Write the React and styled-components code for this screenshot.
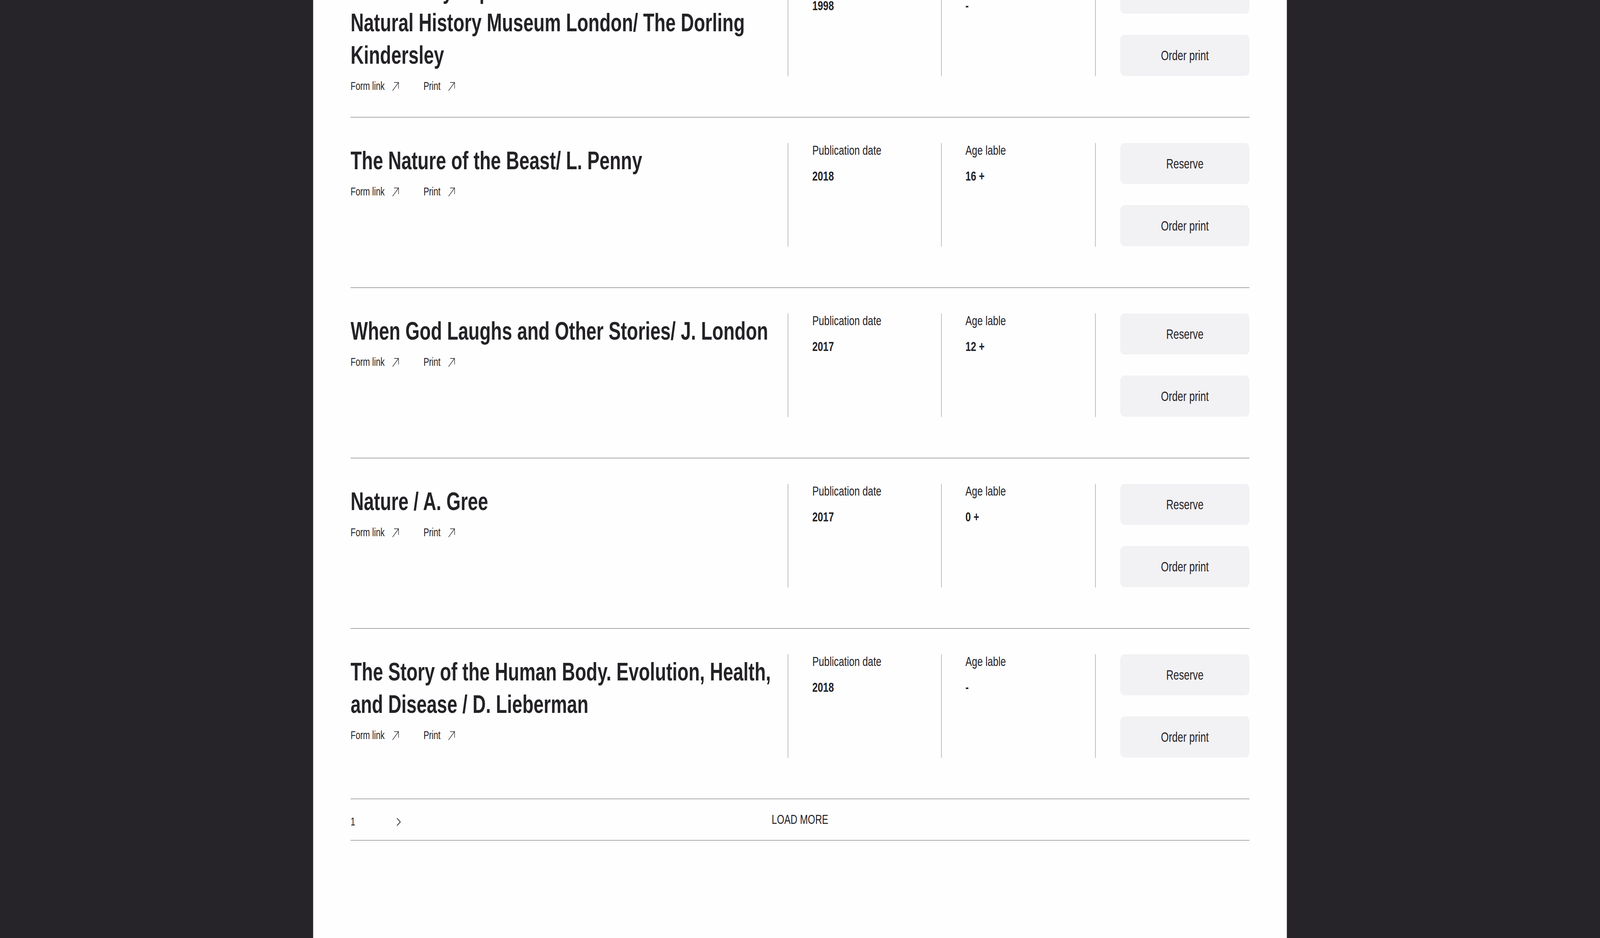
import React, { useLayoutEffect, useState } from "react";
import styled, { createGlobalStyle } from "styled-components";

const DESIGN_WIDTH = 5600;

const GlobalStyle = createGlobalStyle`
  html, body {
    margin: 0;
    padding: 0;
    background: #262428;
    overflow: hidden;
  }
  body {
    font-family: "Liberation Sans", Arial, Helvetica, sans-serif;
    color: #242226;
  }
  * { box-sizing: border-box; }
`;

const Stage = styled.div`
  width: ${DESIGN_WIDTH}px;
  height: 100vh;
  overflow: hidden;
  transform-origin: 0 0;
`;

const Page = styled.div`
  display: flex;
  justify-content: center;
  height: 100%;
`;

const Panel = styled.main`
  width: 3408px;
  height: 100%;
  background: #fefefe;
  padding: 0 131px;
`;

const List = styled.section`
  margin-top: -135px;
`;

const Row = styled.article`
  display: grid;
  grid-template-columns: 1530px 537px 539px 540px;
  align-items: start;
  min-height: 436px;
  padding-top: 65px;
  border-bottom: 2px solid #a9a9a9;
`;

const Main = styled.div`
  padding-right: 20px;
`;

const Title = styled.h2`
  margin: 4px 0 0;
  font-size: 64px;
  line-height: 83px;
  font-weight: 700;
  color: #242226;
`;

const Links = styled.div`
  display: flex;
  align-items: center;
  gap: 85px;
  margin-top: 20px;
`;

const LinkItem = styled.a`
  display: inline-flex;
  align-items: center;
  gap: 27px;
  font-size: 29px;
  line-height: 35px;
  color: #242226;
  text-decoration: none;
`;

const Column = styled.div`
  height: 265px;
  border-left: 2px solid #a9a9a9;
  padding-left: ${(p) => p.$pad}px;
`;

const Label = styled.div`
  font-size: 34px;
  line-height: 36px;
  color: #242226;
`;

const Value = styled.div`
  margin-top: 30px;
  font-size: 34px;
  line-height: 36px;
  font-weight: 700;
  color: #242226;
`;

const Actions = styled(Column)`
  display: flex;
  flex-direction: column;
  gap: 54px;
`;

const Button = styled.button`
  width: 452px;
  height: 105px;
  border: none;
  border-radius: 14px;
  background: #f2f1f3;
  font-family: inherit;
  font-size: 35px;
  color: #242226;
  cursor: pointer;
`;

const Pagination = styled.nav`
  display: grid;
  grid-template-columns: 1fr auto 1fr;
  align-items: center;
  height: 106px;
  border-bottom: 2px solid #a9a9a9;
`;

const Pager = styled.div`
  display: flex;
  align-items: center;
  margin-top: 11px;
`;

const PageNum = styled.span`
  font-size: 29px;
  line-height: 35px;
  color: #242226;
`;

const NextBtn = styled.button`
  display: flex;
  align-items: center;
  margin-left: 145px;
  padding: 0;
  border: none;
  background: none;
  cursor: pointer;
`;

const LoadMore = styled.button`
  padding: 0;
  border: none;
  background: none;
  font-family: inherit;
  font-size: 33px;
  line-height: 38px;
  color: #242226;
  cursor: pointer;
`;

const Arrow = () => (
  <svg width="24" height="24" viewBox="0 0 24 24" fill="none" stroke="#242226" strokeWidth="1.7" strokeLinecap="square">
    <path d="M1.5 22.5 L22 2" />
    <path d="M7 2 H22 V17" />
  </svg>
);

const Chevron = () => (
  <svg width="15" height="22" viewBox="0 0 15 22" fill="none" stroke="#242226" strokeWidth="2.2">
    <path d="M1.5 1.5 L13 11 L1.5 20.5" />
  </svg>
);

const books = [
  { title: "Visual Encyclopedia of the Wild Animal World/ Natural History Museum London/ The Dorling Kindersley", year: "1998", age: "-" },
  { title: "The Nature of the Beast/ L. Penny", year: "2018", age: "16 +" },
  { title: "When God Laughs and Other Stories/ J. London", year: "2017", age: "12 +" },
  { title: "Nature / A. Gree", year: "2017", age: "0 +" },
  { title: "The Story of the Human Body. Evolution, Health, and Disease / D. Lieberman", year: "2018", age: "-" },
];

export default function App() {
  const [scale, setScale] = useState(1);
  useLayoutEffect(() => {
    const fit = () => setScale(Math.min(1, window.innerWidth / DESIGN_WIDTH));
    fit();
    window.addEventListener("resize", fit);
    return () => window.removeEventListener("resize", fit);
  }, []);

  return (
    <>
      <GlobalStyle />
      <Stage style={{ transform: `scaleX(${scale})` }}>
        <Page>
          <Panel>
            <List>
              {books.map((b) => (
                <Row key={b.title}>
                  <Main>
                    <Title>{b.title}</Title>
                    <Links>
                      <LinkItem href="#">Form link <Arrow /></LinkItem>
                      <LinkItem href="#">Print <Arrow /></LinkItem>
                    </Links>
                  </Main>
                  <Column $pad={84}>
                    <Label>Publication date</Label>
                    <Value>{b.year}</Value>
                  </Column>
                  <Column $pad={83}>
                    <Label>Age lable</Label>
                    <Value>{b.age}</Value>
                  </Column>
                  <Actions $pad={86}>
                    <Button>Reserve</Button>
                    <Button>Order print</Button>
                  </Actions>
                </Row>
              ))}
            </List>
            <Pagination>
              <Pager>
                <PageNum>1</PageNum>
                <NextBtn aria-label="Next page"><Chevron /></NextBtn>
              </Pager>
              <LoadMore>LOAD MORE</LoadMore>
              <span />
            </Pagination>
          </Panel>
        </Page>
      </Stage>
    </>
  );
}
